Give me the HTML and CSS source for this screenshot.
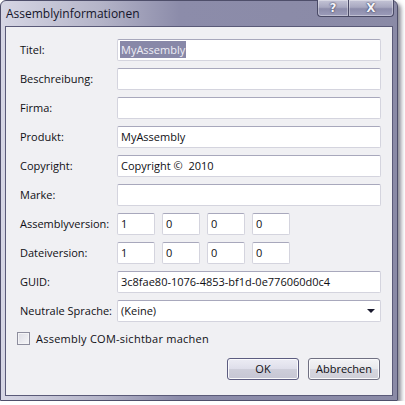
FILE: index.html
```html
<!DOCTYPE html>
<html>
<head>
<meta charset="utf-8">
<link rel="stylesheet" href="styles.css">
</head>
<body>
<div class="window">
  <div class="titlebar">
    <span class="title">Assemblyinformationen</span>
    <div class="caption-btns">
      <div class="cbtn help">?</div>
      <div class="cbtn close">X</div>
    </div>
  </div>
  <div class="client">
    <div class="form">
      <label>Titel:</label><div class="field"><span class="sel">MyAssembly</span></div>
      <label>Beschreibung:</label><div class="field"></div>
      <label>Firma:</label><div class="field"></div>
      <label>Produkt:</label><div class="field">MyAssembly</div>
      <label>Copyright:</label><div class="field">Copyright ©&nbsp; 2010</div>
      <label>Marke:</label><div class="field"></div>
      <label>Assemblyversion:</label>
      <div class="versions"><div class="field">1</div><div class="field">0</div><div class="field">0</div><div class="field">0</div></div>
      <label>Dateiversion:</label>
      <div class="versions"><div class="field">1</div><div class="field">0</div><div class="field">0</div><div class="field">0</div></div>
      <label>GUID:</label><div class="field">3c8fae80-1076-4853-bf1d-0e776060d0c4</div>
      <label>Neutrale Sprache:</label><div class="field combo"><span>(Keine)</span><span class="arrow"></span></div>
    </div>
    <div class="check"><span class="box"></span><span class="check-label">Assembly COM-sichtbar machen</span></div>
    <div class="buttons">
      <div class="btn default">OK</div>
      <div class="btn">Abbrechen</div>
    </div>
  </div>
</div>
</body>
</html>
```
FILE: styles.css
```css
html, body {
  margin: 0;
  padding: 0;
  background: #ffffff;
}
body {
  font-family: "Open Sans", "Noto Sans", sans-serif;
  font-size: 11px;
  color: #0f0f14;
}
.window {
  width: 398px;
  height: 401px;
  box-sizing: border-box;
  border: 1px solid #4e4e6a;
  border-radius: 6px 6px 0 0;
  background: linear-gradient(to right, #d6d6e4 0%, #b4b4c8 25%, #8c8caa 45%, #8a8aa6 100%);
  padding: 0 4px 4px 4px;
  box-shadow: 3px 3px 4px rgba(40, 40, 60, 0.55);
  display: flex;
  flex-direction: column;
}
.titlebar {
  height: 25px;
  display: flex;
  justify-content: space-between;
  align-items: flex-start;
}
.title {
  padding-left: 1px;
  line-height: 25px;
  font-size: 12px;
  color: #15152a;
}
.caption-btns {
  display: flex;
  margin-top: -1px;
  margin-right: -1px;
}
.cbtn {
  height: 17px;
  box-sizing: border-box;
  border: 1px solid #4a4a66;
  border-top: none;
  background: linear-gradient(to bottom, #c4c4d6 0%, #a8a8c0 45%, #8c8caa 55%, #9c9cba 100%);
  box-shadow: inset 0 0 0 1px rgba(255, 255, 255, 0.35);
  color: #f4f4fa;
  font-family: "DejaVu Sans", sans-serif;
  font-weight: bold;
  font-size: 12px;
  line-height: 16px;
  text-align: center;
  text-shadow: 0 0 2px #3a3a58, 0 0 1px #3a3a58;
}
.help {
  width: 31px;
  border-radius: 0 0 0 4px;
  border-right: none;
}
.close {
  width: 46px;
  border-radius: 0 0 4px 0;
}
.client {
  flex: 1;
  border: 1px solid #5a5a78;
  background: #f0f0f3;
  padding: 12px 11px 0 11px;
  display: flex;
  flex-direction: column;
}
.form {
  padding-left: 3px;
  display: grid;
  grid-template-columns: 97px 264px;
  grid-auto-rows: 22px;
  row-gap: 7px;
  align-items: center;
}
label {
  font-size: 11px;
  line-height: 22px;
}
.field {
  height: 22px;
  box-sizing: border-box;
  border: 1px solid #d4d4de;
  border-top-color: #a8a8bc;
  border-radius: 2px;
  background: #ffffff;
  padding: 0 3px;
  line-height: 20px;
  white-space: nowrap;
  overflow: hidden;
}
.sel {
  background: #8888a8;
  color: #eeeef6;
  display: inline-block;
  line-height: 17px;
  margin-left: -1px;
  padding: 0 1px;
}
.versions {
  display: flex;
  gap: 7px;
}
.versions .field {
  width: 38px;
}
.combo {
  display: flex;
  justify-content: space-between;
  align-items: center;
  padding-right: 5px;
}
.arrow {
  width: 0;
  height: 0;
  border-left: 4px solid transparent;
  border-right: 4px solid transparent;
  border-top: 4px solid #1a1a2e;
}
.check {
  margin-top: 10px;
  display: flex;
  align-items: center;
  gap: 6px;
  height: 13px;
}
.check-label {
  letter-spacing: 0.25px;
}
.box {
  width: 13px;
  height: 13px;
  box-sizing: border-box;
  border: 1px solid #8e8e9e;
  background: linear-gradient(135deg, #dcdce4, #f6f6f8);
  box-shadow: inset 0 0 0 1px #f4f4f6;
}
.buttons {
  margin-top: 13px;
  display: flex;
  justify-content: flex-end;
  gap: 9px;
  padding-right: 1px;
}
.btn {
  width: 72px;
  height: 22px;
  box-sizing: border-box;
  border: 1px solid #707082;
  border-radius: 3px;
  background: linear-gradient(to bottom, #f4f4f6 0%, #e8e8ec 50%, #d8d8e0 51%, #cfcfd8 100%);
  box-shadow: inset 0 0 0 1px #fafafc;
  text-align: center;
  line-height: 20px;
  font-size: 11px;
}
.btn.default {
  border-color: #5c5c80;
  background: linear-gradient(to bottom, #ececf4 0%, #dedeea 50%, #ceceda 51%, #c6c6d4 100%);
}
```
